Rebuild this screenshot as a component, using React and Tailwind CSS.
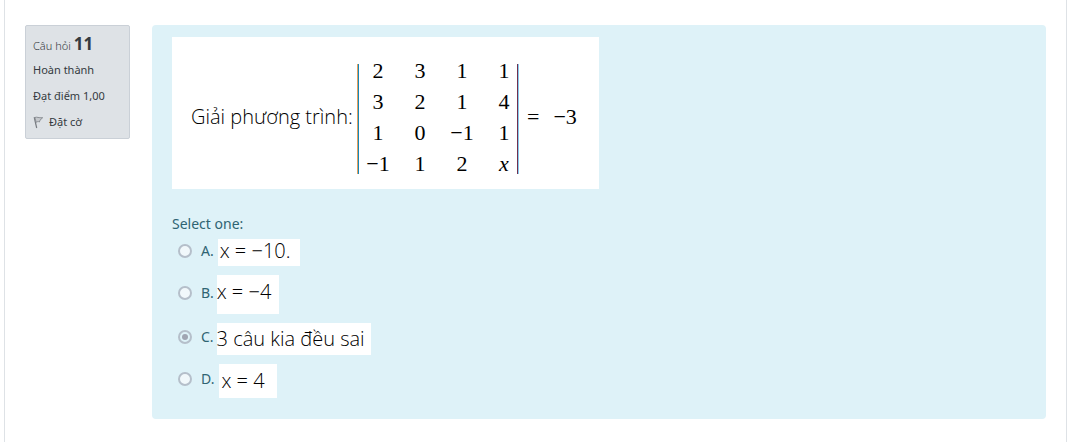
import React from "react";

const matrix = [
  ["2", "3", "1", "1"],
  ["3", "2", "1", "4"],
  ["1", "0", "−1", "1"],
  ["−1", "1", "2", "x"],
];

const answers = [
  { letter: "A.", text: "x = −10.", gap: "gap-1", box: "h-[27px] w-[82px] pl-0.5 pb-1" },
  { letter: "B.", text: "x = −4", gap: "gap-[3px]", box: "h-[39px] w-[62px] pb-1.5" },
  { letter: "C.", text: "3 câu kia đều sai", gap: "gap-[3px]", box: "h-8 w-[154px]" },
  { letter: "D.", text: "x = 4", gap: "gap-[5px]", box: "h-[34px] w-[58px] pl-0.5" },
];

function FlagIcon() {
  return (
    <svg viewBox="0 0 12 13" className="h-[13px] w-3" fill="none" aria-hidden="true">
      <path d="M1.2 1.2 3.7 12" stroke="#777b80" strokeWidth="1.2" />
      <path d="M1.8 1.5C4 .5 5.5 2.2 9.7 1.7L7 4.2 6.4 6C5.4 5.3 4.2 5.6 3.2 6.3Z" fill="#c5c8cc" stroke="#85898e" strokeWidth=".9" />
    </svg>
  );
}

function QuestionInfo() {
  return (
    <aside className="w-[105px] shrink-0 rounded-xs border border-[#cad0d7] bg-[#dee2e6] px-[7px] pt-[5px] pb-[3px] font-['Noto_Sans','Open_Sans',sans-serif] text-[11px] leading-[26px] text-[#343a40]">
      <h3 className="flex h-[26px] items-baseline gap-[3px] whitespace-nowrap font-light">
        Câu hỏi <span className="text-[17px] font-bold">11</span>
      </h3>
      <div>Hoàn thành</div>
      <div className="whitespace-nowrap">Đạt điểm 1,00</div>
      <button type="button" className="flex items-center gap-1">
        <FlagIcon />
        Đặt cờ
      </button>
    </aside>
  );
}

function Equation() {
  return (
    <div className="flex h-[152px] w-[427px] max-w-full items-center bg-white pl-[19px] text-black">
      <span className="w-[166px] shrink-0 whitespace-nowrap pt-2 font-['Open_Sans','Noto_Sans',sans-serif] text-xl font-light">
        Giải phương trình:
      </span>
      <div className="flex items-center pt-3 font-['Liberation_Serif',serif] text-[22px]">
        <span className="h-[110px] w-0.5 border-l border-r border-l-[#e2a060] border-r-[#1688b8]" />
        <table className="mb-1 ml-1.5 border-collapse text-center leading-[31px]">
          <tbody>
            {matrix.map((row, r) => (
              <tr key={r}>
                {row.map((value, c) => (
                  <td key={c} className={c < 3 ? "w-[42px] p-0 pr-4 whitespace-nowrap" : "w-[26px] p-0"}>
                    <span className={value === "x" ? "italic" : ""}>{value}</span>
                  </td>
                ))}
              </tr>
            ))}
          </tbody>
        </table>
        <span className="h-[110px] w-0.5 border-l border-r border-l-[#703050] border-r-[#86cbed]" />
        <span className="ml-2 flex gap-3.5 whitespace-nowrap pb-1">
          <span>=</span>
          <span>−3</span>
        </span>
      </div>
    </div>
  );
}

export default function App() {
  return (
    <main className="mr-0.5 ml-1 flex min-h-screen items-start gap-[22px] border-x border-[#dee2e6] bg-white pt-[25px] pr-5 pl-5">
      <QuestionInfo />
      <section className="min-w-0 flex-1 rounded bg-[#def2f8] px-5 pt-3 pb-[21px] font-['Noto_Sans','Open_Sans',sans-serif] text-sm text-[#2f6473]">
        <Equation />
        <fieldset className="mt-6">
          <legend className="pb-1 leading-[22px]">Select one:</legend>
          <div className="flex flex-col items-start gap-[9px]">
            {answers.map(({ letter, text, gap, box }) => (
              <label key={letter} className={`flex items-center pl-1.5 ${gap}`}>
                <span className="flex items-center gap-2 whitespace-nowrap pb-1">
                  <input
                    type="radio"
                    name="answer"
                    defaultChecked={letter === "C."}
                    className="size-3.5 appearance-none rounded-full border-2 border-[#b5bfca] bg-[#f1f8fb] p-0.5 checked:bg-[#a0a5b2] checked:bg-clip-content"
                  />
                  <span className="pl-px">{letter}</span>
                </span>
                <span className={`flex items-center whitespace-nowrap bg-white font-['Open_Sans','Noto_Sans',sans-serif] text-xl font-light text-black ${box}`}>
                  {text}
                </span>
              </label>
            ))}
          </div>
        </fieldset>
      </section>
    </main>
  );
}
